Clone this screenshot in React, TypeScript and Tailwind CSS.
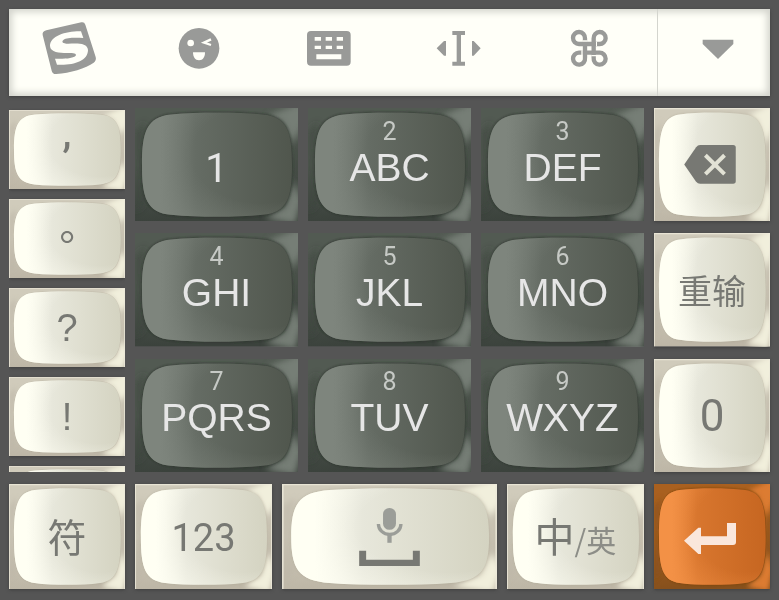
import type { ReactNode } from 'react'
import { clsx } from 'clsx'

type Tone = 'cream' | 'slate' | 'orange'

const TONES: Record<Tone, { frame: string; shade: string; glow: string; light: string; mid: string; dark: string; rim: string }> = {
  cream: { frame: '#d0cbbb', shade: '#bdb6a6', glow: '#f1efdc', light: '#fffff3', mid: '#e7e7db', dark: '#d4d3c1', rim: '#a9a390' },
  slate: { frame: '#525a52', shade: '#3b423c', glow: '#767e76', light: '#7e857d', mid: '#656c64', dark: '#50564d', rim: '#2c332c' },
  orange: { frame: '#a9601f', shade: '#86501c', glow: '#dc7c33', light: '#f39146', mid: '#d8762e', dark: '#c66621', rim: '#7a430f' },
}

const TONE_NAMES = Object.keys(TONES) as Tone[]

const CAP =
  'M7 57C7 23 12 9 36 6.5C50 5 66 4.5 82 4.5C98 4.5 114 5 128 6.5C152 9 157 23 157 57C157 90 152 104 128 106.5C114 108 98 108.5 82 108.5C66 108.5 50 108 36 106.5C12 104 7 90 7 57Z'

// shared gradients for every key face
function KeyDefs() {
  return (
    <svg aria-hidden="true" className="absolute size-0">
      <defs>
        {TONE_NAMES.map((tone) => {
          const c = TONES[tone]
          return (
            <g key={tone}>
              <linearGradient id={`cap-${tone}`}>
                <stop offset="0" stopColor={c.light} />
                <stop offset="0.12" stopColor={c.light} />
                <stop offset="0.36" stopColor={c.mid} />
                <stop offset="1" stopColor={c.dark} />
              </linearGradient>
              <radialGradient id={`gloss-${tone}`} cx="0.8" cy="0.4" r="0.85">
                <stop offset="0.55" stopColor={c.light} stopOpacity="0" />
                <stop offset="0.8" stopColor={c.light} stopOpacity="0.35" />
                <stop offset="1" stopColor={c.light} stopOpacity="0.7" />
              </radialGradient>
              <linearGradient id={`frame-${tone}`} x1="0" y1="0" x2="0.1" y2="1">
                <stop offset="0" stopColor={c.frame} />
                <stop offset="0.5" stopColor={c.frame} />
                <stop offset="1" stopColor={c.shade} />
              </linearGradient>
            </g>
          )
        })}
        <filter id="soft" x="-30%" y="-30%" width="160%" height="160%">
          <feGaussianBlur stdDeviation="3" />
        </filter>
        <filter id="edge" x="-10%" y="-10%" width="120%" height="120%">
          <feGaussianBlur stdDeviation="1" />
        </filter>
      </defs>
    </svg>
  )
}

function KeyFace({ tone }: { tone: Tone }) {
  const c = TONES[tone]
  return (
    <svg aria-hidden="true" viewBox="0 0 163 113" preserveAspectRatio="none" className="absolute inset-0 size-full">
      <rect width="163" height="113" fill={`url(#frame-${tone})`} />
      <g filter="url(#soft)">
        <path d="M0 24L10 14L7 57L10 95L0 104Z" fill={c.shade} opacity="0.6" />
        <path d="M132 8L172 -8V10L158 34L146 12Z" fill={c.glow} />
        <path d="M157 42L166 24V76L158 70Z" fill={c.shade} opacity="0.55" />
        <path d="M130 110L150 98L159 74L167 92L160 116Z" fill={c.glow} />
      </g>
      <path d={CAP} fill={c.rim} stroke={c.rim} strokeWidth="1" filter="url(#edge)" opacity={tone === 'cream' ? 0.4 : 0.8} />
      <path d={CAP} fill={`url(#cap-${tone})`} />
      <path d={CAP} fill={`url(#gloss-${tone})`} />
      {tone === 'cream' && (
        <path d="M0.5 113V0.5H162.5V113" fill="none" stroke="#eeeadb" strokeWidth="1.5" opacity="0.8" />
      )}
    </svg>
  )
}

interface KeyProps {
  tone?: Tone
  label?: string
  className?: string
  children: ReactNode
}

function Key({ tone = 'cream', label, className, children }: KeyProps) {
  return (
    <button
      type="button"
      aria-label={label}
      className={clsx(
        'relative flex min-w-0 cursor-pointer items-center justify-center overflow-hidden whitespace-nowrap',
        tone === 'slate' ? 'text-[#e6e6e6]' : 'text-[#777873] shadow-[0_1px_3px_#3f3f3f]',
        className
      )}
    >
      <KeyFace tone={tone} />
      <span className="relative flex flex-col items-center">{children}</span>
    </button>
  )
}

const TOOLS = [
  {
    label: 'Sogou',
    viewBox: '123 60 168 168',
    icon: (
      <>
        <path d="M139 91L244 67Q253 65 256 74L287 171Q290 181 281 188C258 205 210 219 169 222Q158 223 155 212L128 105Q126 94 139 91Z" />
        <path
          fill="#fffff8"
          d="M243 94C198 93 150 108 150 138C151 161 190 159 210 159C226 159 230 163 227 167C222 174 198 177 165 176L171 194C218 197 264 184 264 150C263 127 228 130 205 131C186 131 184 124 191 119C199 113 225 112 250 114Z"
        />
      </>
    ),
  },
  {
    label: 'Emoji',
    viewBox: '513 60 168 168',
    icon: (
      <>
        <circle cx="597" cy="145" r="61" />
        <circle cx="572" cy="129" r="10" fill="#fffff8" />
        <path d="M633 118L612 128L633 135" fill="none" stroke="#fffff8" strokeWidth="7" />
        <path d="M579 157H615C615 171 609 181 597 181S579 171 579 157Z" fill="#fffff8" />
      </>
    ),
  },
  {
    label: 'Keyboard layout',
    viewBox: '123 60 168 168',
    icon: (
      <>
        <rect x="141" y="93" width="131" height="104" rx="12" />
        <path
          fill="#fffff8"
          d="M164 111h19v11h-19zM197 111h19v11h-19zM230 111h19v11h-19zM164 137h19v10h-19zM197 137h19v10h-19zM230 137h19v10h-19zM169 163h75v15h-75z"
        />
      </>
    ),
  },
  {
    label: 'Move cursor',
    viewBox: '513 60 168 168',
    icon: (
      <path d="M577 93h38v12h-12v80h12v12h-38v-12h13v-80h-13zM530 145L552 123H558V167H552ZM662 145L641 123H636V167H641Z" />
    ),
  },
  {
    label: 'Shortcuts',
    viewBox: '123 60 168 168',
    icon: (
      <>
        <path
          d="M195 132V115A18 18 0 1 0 177 132H238A18 18 0 1 0 221 115V174A18 18 0 1 0 238 158H177A18 18 0 1 0 195 174Z"
          fill="none"
          stroke="#999a98"
          strokeWidth="13"
        />
        <path d="M188 121h14v4h-14zM228 125h3v14h-3zM214 165h14v4h-14zM184 151h4v14h-4z" fill="#fffff8" />
      </>
    ),
  },
]

function Toolbar() {
  return (
    <header className="flex h-[87px] bg-[#fffff8] shadow-[inset_0_0_7px_3px_#d3d4cc,0_1px_3px_#3f3f3f]">
      <nav className="flex flex-1 items-center justify-between pr-10 pb-2.5 pl-8">
        {TOOLS.map((tool) => (
          <button key={tool.label} type="button" aria-label={tool.label} className="cursor-pointer">
            <svg viewBox={tool.viewBox} className="size-14 fill-[#999a98]">
              {tool.icon}
            </svg>
          </button>
        ))}
      </nav>
      <button
        type="button"
        aria-label="Hide keyboard"
        className="flex w-[113px] cursor-pointer items-center justify-center border-l border-[#d4d5ce] pb-2.5 pl-2"
      >
        <svg viewBox="511 60 168 168" className="size-14 fill-[#999a98]">
          <path d="M549 119H641V132L595 177L549 132Z" />
        </svg>
      </button>
    </header>
  )
}

const LETTER_KEYS = [
  { digit: '2', letters: 'ABC' },
  { digit: '3', letters: 'DEF' },
  { digit: '4', letters: 'GHI' },
  { digit: '5', letters: 'JKL' },
  { digit: '6', letters: 'MNO' },
  { digit: '7', letters: 'PQRS' },
  { digit: '8', letters: 'TUV' },
  { digit: '9', letters: 'WXYZ' },
]

function Punctuation() {
  return (
    <div className="flex h-[364px] flex-col gap-2.5 overflow-hidden pt-0.5">
      <Key className="h-[79px] shrink-0">
        <span className="pb-8 font-['Roboto',sans-serif] text-[40px] leading-10 font-medium">,</span>
      </Key>
      <Key className="h-[79px] shrink-0">
        <span className="pb-2 font-['Noto_Sans_CJK_TC',sans-serif] text-[40px] leading-10">。</span>
      </Key>
      <Key className="h-[79px] shrink-0">
        <span className="font-['Liberation_Sans',sans-serif] text-[38px] leading-10">?</span>
      </Key>
      <Key className="h-[79px] shrink-0">
        <span className="font-['Liberation_Sans',sans-serif] text-[38px] leading-10">!</span>
      </Key>
      <Key label="More punctuation" className="h-[79px] shrink-0">
        {null}
      </Key>
    </div>
  )
}

export default function App() {
  return (
    <main className="flex min-h-[600px] flex-col gap-3 bg-[#555] px-[9px] pt-[9px] pb-[11px] font-['Liberation_Sans',sans-serif]">
      <KeyDefs />
      <Toolbar />

      <section className="grid grid-cols-[116fr_509fr_116fr] gap-2.5">
        <Punctuation />

        <div className="grid grid-cols-3 grid-rows-3 gap-x-2.5 gap-y-3">
          <Key tone="slate">
            <span className="pt-2 font-['Roboto',sans-serif] text-[40px] leading-10">1</span>
          </Key>
          {LETTER_KEYS.map((key) => (
            <Key key={key.digit} tone="slate" className="pb-0.5">
              <span className="font-['Roboto',sans-serif] text-[25px] leading-8 text-[#c6c9c5]">{key.digit}</span>
              <span className="pb-6 text-[39px] leading-10">{key.letters}</span>
            </Key>
          ))}
        </div>

        <div className="grid grid-rows-3 gap-3">
          <Key label="Backspace" className="pr-1">
            <svg viewBox="132 134 156 118" className="h-[39px] w-[52px]">
              <path
                d="M132 193L168 141Q173 134 180 134H280Q288 134 288 142V243Q288 251 280 251H180Q173 251 168 245Z"
                fill="#777873"
              />
              <path d="M196 165L254 222M254 165L196 222" stroke="#e2e2d5" strokeWidth="12" />
            </svg>
          </Key>
          <Key>
            <span className="font-['Noto_Sans_CJK_SC',sans-serif] text-[34px] leading-10">重输</span>
          </Key>
          <Key>
            <span className="pt-0.5 font-['Roboto',sans-serif] text-[44px] leading-10">0</span>
          </Key>
        </div>
      </section>

      <section className="grid h-[105px] grid-cols-[116fr_137fr_215fr_137fr_116fr] gap-2.5">
        <Key>
          <span className="pb-1 font-['Noto_Sans_CJK_SC',sans-serif] text-[39px] leading-10">符</span>
        </Key>
        <Key>
          <span className="pt-0.5 font-['Roboto',sans-serif] text-[38px] leading-10">123</span>
        </Key>
        <Key label="Space">
          <svg viewBox="252 102 183 175" className="h-[58px] w-[61px]">
            <rect x="324" y="102" width="39" height="66" rx="19" fill="#9b9d98" />
            <path d="M310 150A34 32 0 0 0 378 150" fill="none" stroke="#9b9d98" strokeWidth="10" />
            <path d="M337 180h13v27h-13z" fill="#9b9d98" />
            <path d="M252 231h21v27h141v-27h21v46H252z" fill="#777873" />
          </svg>
        </Key>
        <Key>
          <span className="flex items-baseline font-['Noto_Sans_CJK_SC',sans-serif] text-[40px] leading-10">
            中<span className="text-[30px] text-[#8c8d87]">/英</span>
          </span>
        </Key>
        <Key tone="orange" label="Enter" className="pt-1 pr-1">
          <svg viewBox="552 144 156 93" className="h-[31px] w-[52px]">
            <path d="M552 197L595 158H603V184H681V144H708V201Q708 210 699 210H603V237H595Z" fill="#fae7dc" />
          </svg>
        </Key>
      </section>
    </main>
  )
}
